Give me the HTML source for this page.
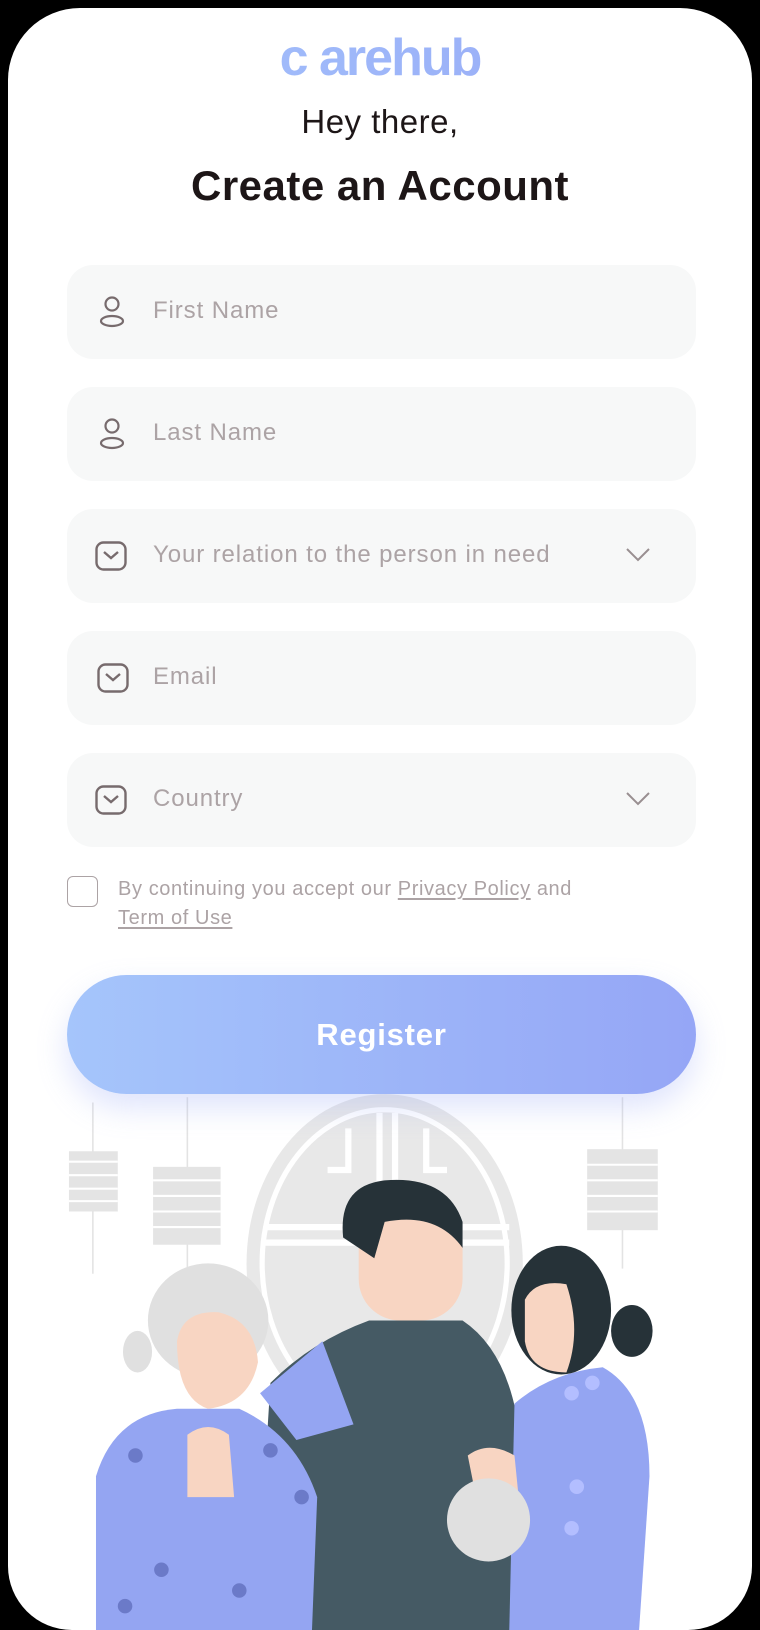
<!DOCTYPE html>
<html><head><meta charset="utf-8"><style>
*{margin:0;padding:0;box-sizing:border-box}
html,body{width:760px;height:1630px;background:#000;overflow:hidden;font-family:"Liberation Sans",sans-serif}
.card{position:absolute;left:8px;top:8px;width:744px;height:1622px;background:#fff;border-radius:72px 72px 64px 64px;overflow:hidden}
.abs{position:absolute}
.logo{left:0;width:760px;top:28px;text-align:center;font-size:52px;font-weight:bold;letter-spacing:-2px;background:linear-gradient(90deg,#a6c6fc,#95a6f6);-webkit-background-clip:text;background-clip:text;color:transparent}
.hey{left:0;width:760px;top:103px;text-align:center;font-size:33px;letter-spacing:0.5px;color:#1d1617}
.title{left:0;width:760px;top:162px;text-align:center;font-size:42px;letter-spacing:0.5px;font-weight:bold;color:#1d1617}
.field{position:absolute;left:67px;width:629px;height:94px;background:#f7f8f8;border-radius:26px}
.field span{position:absolute;left:86px;top:32px;font-size:24px;letter-spacing:0.9px;color:#aca3a5}
.field svg{position:absolute}
.chev{left:558px;top:38px}
.cb{left:67px;top:876px;width:31px;height:31px;border:1.5px solid #aca3a5;border-radius:6px}
.terms{left:118px;top:875px;font-size:20px;letter-spacing:0.6px;line-height:29px;color:#aca3a5;width:560px}
.terms u{text-underline-offset:3px}
.btn{left:67px;top:975px;width:629px;height:119px;border-radius:60px;background:linear-gradient(90deg,#a5c5fb,#95a6f6);color:#fff;font-size:31px;letter-spacing:0.8px;font-weight:bold;text-align:center;line-height:119px;box-shadow:0 14px 30px rgba(150,166,246,.3)}
</style></head><body>
<div class="card"></div>
<svg class="abs" style="left:0;top:1090px" width="760" height="540" viewBox="0 1048 731 520">
<g fill="none" stroke="#e3e3e3" stroke-width="1.5">
<line x1="89" y1="1060" x2="89" y2="1225"/><line x1="180" y1="1055" x2="180" y2="1260"/><line x1="599" y1="1055" x2="599" y2="1220"/>
</g>
<g fill="#e4e4e4">
<rect x="66" y="1107" width="47" height="58"/><rect x="147" y="1122" width="65" height="75"/><rect x="565" y="1105" width="68" height="78"/>
</g>
<g stroke="#fff" stroke-width="2"><line x1="66" y1="1117" x2="113" y2="1117"/><line x1="66" y1="1130" x2="113" y2="1130"/><line x1="66" y1="1143" x2="113" y2="1143"/><line x1="66" y1="1155" x2="113" y2="1155"/>
<line x1="147" y1="1135" x2="212" y2="1135"/><line x1="147" y1="1150" x2="212" y2="1150"/><line x1="147" y1="1165" x2="212" y2="1165"/><line x1="147" y1="1180" x2="212" y2="1180"/>
<line x1="565" y1="1120" x2="633" y2="1120"/><line x1="565" y1="1135" x2="633" y2="1135"/><line x1="565" y1="1150" x2="633" y2="1150"/><line x1="565" y1="1165" x2="633" y2="1165"/></g>
<ellipse cx="370" cy="1215" rx="133" ry="163" fill="#e8e8e8"/>
<ellipse cx="370" cy="1215" rx="118" ry="148" fill="none" stroke="#fff" stroke-width="5"/>
<g stroke="#fff" stroke-width="6" fill="none"><line x1="255" y1="1180" x2="490" y2="1180"/><line x1="255" y1="1195" x2="490" y2="1195"/><line x1="365" y1="1070" x2="365" y2="1180"/><line x1="380" y1="1070" x2="380" y2="1180"/><path d="M335 1085V1125h-20M410 1085V1125h20"/></g>
<path d="M245 1568L260 1330Q300 1290 355 1270L445 1270Q490 1300 500 1380L520 1568Z" fill="#455a64"/>
<rect x="345" y="1160" width="100" height="110" rx="40" fill="#f8d5c2"/>
<path d="M330 1190Q325 1140 370 1135Q430 1130 445 1175L445 1200Q420 1165 370 1175L360 1210Z" fill="#263238"/>
<path d="M250 1340L310 1290L340 1370L285 1385Z" fill="#94a5f2"/>
<path d="M490 1568L495 1350Q530 1320 580 1315Q625 1340 625 1420L615 1568Z" fill="#94a5f2"/>
<ellipse cx="540" cy="1260" rx="48" ry="62" fill="#263238"/>
<ellipse cx="608" cy="1280" rx="20" ry="25" fill="#263238"/>
<path d="M505 1250Q515 1230 545 1235Q560 1280 545 1320Q510 1320 505 1290Z" fill="#f8d5c2"/>
<path d="M450 1400Q470 1385 495 1400L500 1450L460 1450Z" fill="#f8d5c2"/>
<path d="M92 1568L92 1420Q110 1360 170 1355L230 1355Q285 1380 305 1440L300 1568Z" fill="#94a5f2"/>
<ellipse cx="200" cy="1270" rx="58" ry="55" fill="#e0e0e0"/>
<ellipse cx="132" cy="1300" rx="14" ry="20" fill="#e0e0e0"/>
<path d="M170 1290Q175 1260 210 1262Q245 1270 248 1310Q240 1350 200 1355Q170 1345 170 1290Z" fill="#f8d5c2"/>
<path d="M180 1380Q200 1365 220 1380L225 1440L180 1440Z" fill="#f8d5c2"/>
<circle cx="470" cy="1462" r="40" fill="#e0e0e0"/>
<g fill="#6b7ac8"><circle cx="130" cy="1400" r="7"/><circle cx="260" cy="1395" r="7"/><circle cx="155" cy="1510" r="7"/><circle cx="230" cy="1530" r="7"/><circle cx="120" cy="1545" r="7"/><circle cx="290" cy="1440" r="7"/></g>
<g fill="#b3beff"><circle cx="570" cy="1330" r="7"/><circle cx="550" cy="1340" r="7"/><circle cx="555" cy="1430" r="7"/><circle cx="550" cy="1470" r="7"/></g>
</svg>
<div class="abs logo">c arehub</div>
<div class="abs hey">Hey there,</div>
<div class="abs title">Create an Account</div>

<div class="field" style="top:265px"><svg style="left:32px;top:31px" width="26" height="32" viewBox="0 0 26 32" fill="none" stroke="#776b6d" stroke-width="2.2"><circle cx="13" cy="8" r="6.5"/><ellipse cx="13" cy="25" rx="11" ry="5"/></svg><span>First Name</span></div>
<div class="field" style="top:387px"><svg style="left:32px;top:31px" width="26" height="32" viewBox="0 0 26 32" fill="none" stroke="#776b6d" stroke-width="2.2"><circle cx="13" cy="8" r="6.5"/><ellipse cx="13" cy="25" rx="11" ry="5"/></svg><span>Last Name</span></div>
<div class="field" style="top:509px"><svg style="left:28px;top:32px" width="32" height="30" viewBox="0 0 32 30" fill="none" stroke="#776b6d" stroke-width="2.4"><rect x="1.5" y="1.5" width="29" height="27" rx="7"/><path d="M9 11l7 6 7-6"/></svg><span>Your relation to the person in need</span><svg class="chev" width="26" height="16" viewBox="0 0 26 16" fill="none" stroke="#998f91" stroke-width="2"><path d="M2 2l11 11 11-11"/></svg></div>
<div class="field" style="top:631px"><svg style="left:30px;top:32px" width="32" height="30" viewBox="0 0 32 30" fill="none" stroke="#776b6d" stroke-width="2.4"><rect x="1.5" y="1.5" width="29" height="27" rx="7"/><path d="M9 11l7 6 7-6"/></svg><span>Email</span></div>
<div class="field" style="top:753px"><svg style="left:28px;top:32px" width="32" height="30" viewBox="0 0 32 30" fill="none" stroke="#776b6d" stroke-width="2.4"><rect x="1.5" y="1.5" width="29" height="27" rx="7"/><path d="M9 11l7 6 7-6"/></svg><span>Country</span><svg class="chev" width="26" height="16" viewBox="0 0 26 16" fill="none" stroke="#998f91" stroke-width="2"><path d="M2 2l11 11 11-11"/></svg></div>

<div class="abs cb"></div>
<div class="abs terms">By continuing you accept our <u>Privacy Policy</u> and<br><u>Term of Use</u></div>
<div class="abs btn">Register</div>
</body></html>
